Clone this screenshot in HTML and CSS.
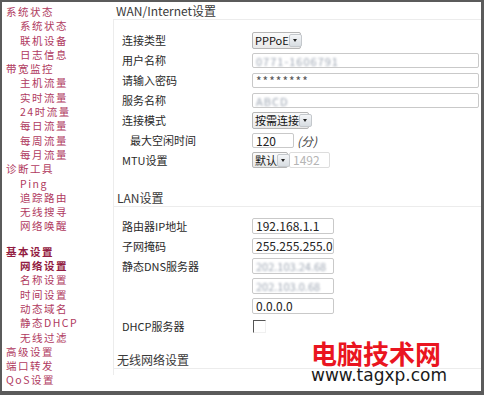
FILE: index.html
```html
<!DOCTYPE html>
<html lang="zh-CN">
<head>
    <meta charset="UTF-8">
    <meta name="viewport" content="width=device-width, initial-scale=1.0">
    <title>WAN/Internet设置</title>
    <link rel="stylesheet" href="styles.css">
</head>
<body>
    <div class="cadre">
        <!-- Menu de gauche -->
        <ul class="menu">
            <li class="groupe">系统状态</li>
            <li class="entree">系统状态</li>
            <li class="entree">联机设备</li>
            <li class="entree">日志信息</li>
            <li class="groupe">带宽监控</li>
            <li class="entree">主机流量</li>
            <li class="entree">实时流量</li>
            <li class="entree">24时流量</li>
            <li class="entree">每日流量</li>
            <li class="entree">每周流量</li>
            <li class="entree">每月流量</li>
            <li class="groupe">诊断工具</li>
            <li class="entree">Ping</li>
            <li class="entree">追踪路由</li>
            <li class="entree">无线搜寻</li>
            <li class="entree">网络唤醒</li>
            <li class="groupe espace actif">基本设置</li>
            <li class="entree actif">网络设置</li>
            <li class="entree">名称设置</li>
            <li class="entree">时间设置</li>
            <li class="entree">动态域名</li>
            <li class="entree">静态DHCP</li>
            <li class="entree">无线过滤</li>
            <li class="groupe">高级设置</li>
            <li class="groupe">端口转发</li>
            <li class="groupe">QoS设置</li>
        </ul>

        <div class="contenu">
            <h2 class="titre">WAN/Internet设置</h2>
            <div class="panneau">
                <div class="formulaire wan">
                    <label>连接类型</label>
                    <div><span class="liste l-pppoe"><span class="valeur">PPPoE</span><span class="fleche"></span></span></div>

                    <label>用户名称</label>
                    <div><span class="champ large"><span class="flou">0771-1606791</span></span></div>

                    <label>请输入密码</label>
                    <div><span class="champ large">********</span></div>

                    <label>服务名称</label>
                    <div><span class="champ large"><span class="flou">ABCD</span></span></div>

                    <label>连接模式</label>
                    <div><span class="liste l-mode"><span class="valeur">按需连接</span><span class="fleche"></span></span></div>

                    <label class="retrait">最大空闲时间</label>
                    <div><span class="champ court">120</span><span class="unite">(分)</span></div>

                    <label>MTU设置</label>
                    <div><span class="liste l-mtu"><span class="valeur">默认</span><span class="fleche"></span></span><span class="champ inactif">1492</span></div>
                </div>

                <h2 class="titre">LAN设置</h2>
                <div class="formulaire lan">
                    <label>路由器IP地址</label>
                    <div><span class="champ ip">192.168.1.1</span></div>

                    <label>子网掩码</label>
                    <div><span class="champ ip">255.255.255.0</span></div>

                    <label>静态DNS服务器</label>
                    <div><span class="champ ip"><span class="flou">202.103.24.68</span></span></div>

                    <label></label>
                    <div><span class="champ ip"><span class="flou">202.103.0.68</span></span></div>

                    <label></label>
                    <div><span class="champ ip">0.0.0.0</span></div>

                    <label>DHCP服务器</label>
                    <div><span class="case"></span></div>
                </div>

                <h2 class="titre">无线网络设置</h2>
            </div>

            <!-- Filigrane du site -->
            <div class="filigrane">
                <div class="nom">电脑技术网</div>
                <div class="url">www.tagxp.com</div>
            </div>
        </div>
    </div>
</body>
</html>
```

FILE: styles.css
```css
/* Page du routeur */
body {
    margin: 0;
    padding: 0;
    background-color: #ffffff;
    font-family: "Noto Sans CJK SC", "DejaVu Sans", sans-serif;
}

.cadre {
    display: flex;
    width: 484px;
    height: 395px;
    box-sizing: border-box;
    border-style: solid;
    border-color: #5b5b5b;
    border-width: 2px 3px 4px 2px;
    background-color: #ffffff;
    overflow: hidden;
}

/* Menu */
.menu {
    list-style: none;
    margin: 0;
    padding: 3px 0 0;
    width: 111px;
    flex-shrink: 0;
    font-size: 10.5px;
    letter-spacing: 1.5px;
    color: #b03a60;
}

.menu li {
    line-height: 14.3px;
    height: 14.3px;
    white-space: nowrap;
}

.groupe {
    padding-left: 4px;
}

.entree {
    padding-left: 18px;
}

.espace {
    margin-top: 11px;
}

.actif {
    font-weight: bold;
    color: #921c42;
}

/* Contenu */
.contenu {
    position: relative;
    flex: 1;
}

.titre {
    margin: 0;
    padding-left: 3px;
    height: 17px;
    line-height: 17px;
    font-size: 12px;
    font-weight: normal;
    color: #3a3a3a;
    border-bottom: 1px solid #ececec;
}

.panneau {
    border-left: 1px solid #ececec;
    padding-bottom: 6px;
}

.panneau .titre {
    margin-top: 19px;
}

.panneau .titre:last-child {
    margin-top: 15px;
}

.formulaire {
    display: grid;
    grid-template-columns: 130px 1fr;
    grid-auto-rows: 20px;
    align-items: center;
    padding: 10px 2px 0 8px;
    font-size: 11px;
    color: #2a2a2a;
}

.formulaire.lan {
    padding-top: 9px;
}

.formulaire > div {
    display: flex;
    align-items: center;
}

.retrait {
    padding-left: 8px;
}

/* Champs */
.champ {
    display: inline-block;
    box-sizing: border-box;
    height: 15px;
    line-height: 13px;
    padding: 0 3px;
    border: 1px solid #c9c9c9;
    border-radius: 2px;
    background-color: #ffffff;
    font-size: 12px;
    color: #222222;
    white-space: nowrap;
    overflow: hidden;
}

.champ.large {
    width: 100%;
    color: #555555;
    letter-spacing: 1px;
}

.champ.court {
    width: 42px;
}

.champ.ip {
    width: 82px;
    height: 16px;
    line-height: 14px;
}

.champ.inactif {
    width: 41px;
    height: 16px;
    margin-left: 1px;
    border-color: #dddddd;
    color: #b5b5b5;
}

.flou {
    font-size: 11px;
    color: #9aa3b0;
    filter: blur(1.3px);
}

.unite {
    margin-left: 3px;
    font-style: italic;
    font-size: 12px;
    color: #444444;
}

.liste {
    display: inline-flex;
    align-items: center;
    box-sizing: border-box;
    height: 17px;
    padding-left: 2px;
    border: 1px solid #b5b5b5;
    border-radius: 2px;
    background: linear-gradient(#fbfbfb, #e9e9e9);
    font-size: 11px;
    color: #111111;
}

.l-pppoe {
    width: 49px;
}

.l-mode {
    width: 57px;
}

.l-mtu {
    width: 36px;
    height: 16px;
}

.valeur {
    flex: 1;
    white-space: nowrap;
}

.fleche {
    position: relative;
    flex-shrink: 0;
    width: 11px;
    height: 11px;
    margin-right: 1px;
    border: 1px solid #c4c8cc;
    border-radius: 2px;
    background: linear-gradient(#f4f6f8, #d8dde2);
}

.fleche::after {
    content: '';
    position: absolute;
    left: 3px;
    top: 4px;
    border-left: 2.5px solid transparent;
    border-right: 2.5px solid transparent;
    border-top: 3px solid #222222;
}

.case {
    display: inline-block;
    width: 11px;
    height: 11px;
    margin-left: 1px;
    border-top: 1px solid #555555;
    border-left: 1px solid #555555;
    border-right: 1px solid #f0f0f0;
    border-bottom: 1px solid #f0f0f0;
}

/* Filigrane */
.filigrane {
    position: absolute;
    left: 198px;
    top: 338px;
}

.nom {
    font-size: 26px;
    line-height: 25px;
    font-weight: bold;
    color: #ea1520;
}

.url {
    font-family: "DejaVu Sans", sans-serif;
    font-size: 17px;
    line-height: 21px;
    color: #1a1a1a;
}
```
